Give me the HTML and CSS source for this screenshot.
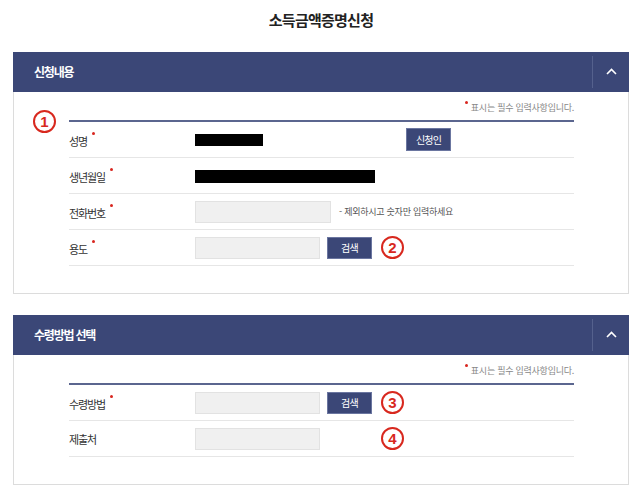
FILE: index.html
```
<!DOCTYPE html>
<html lang="ko">
<head>
<meta charset="utf-8">
<title>소득금액증명신청</title>
<link rel="stylesheet" href="styles.css">
</head>
<body>
<h1 class="page-title">소득금액증명신청</h1>

<section class="panel">
  <div class="panel-head">
    <h2 class="panel-title">신청내용</h2>
    <button class="toggle" type="button" aria-label="접기">
      <svg width="11" height="7" viewBox="0 0 11 7"><polyline points="1,6 5.5,1.5 10,6" fill="none" stroke="#fff" stroke-width="1.6"/></svg>
    </button>
  </div>
  <div class="panel-body">
    <span class="mark mark-overlay">1</span>
    <p class="req-note"><span class="dot"></span>표시는 필수 입력사항입니다.</p>
    <div class="form">
      <div class="row">
        <div class="label">성명<span class="dot"></span></div>
        <div class="value">
          <span class="slot"><span class="masked masked-name"></span></span>
          <button class="btn btn-tall" type="button">신청인</button>
        </div>
      </div>
      <div class="row">
        <div class="label">생년월일<span class="dot"></span></div>
        <div class="value"><span class="masked masked-birth"></span></div>
      </div>
      <div class="row">
        <div class="label">전화번호<span class="dot"></span></div>
        <div class="value">
          <span class="input input-wide"></span>
          <span class="hint">- 제외하시고 숫자만 입력하세요</span>
        </div>
      </div>
      <div class="row">
        <div class="label">용도<span class="dot"></span></div>
        <div class="value ctrl-grid">
          <span class="input"></span>
          <button class="btn" type="button">검색</button>
          <span class="mark">2</span>
        </div>
      </div>
    </div>
  </div>
</section>

<section class="panel">
  <div class="panel-head">
    <h2 class="panel-title">수령방법 선택</h2>
    <button class="toggle" type="button" aria-label="접기">
      <svg width="11" height="7" viewBox="0 0 11 7"><polyline points="1,6 5.5,1.5 10,6" fill="none" stroke="#fff" stroke-width="1.6"/></svg>
    </button>
  </div>
  <div class="panel-body">
    <p class="req-note"><span class="dot"></span>표시는 필수 입력사항입니다.</p>
    <div class="form">
      <div class="row">
        <div class="label">수령방법<span class="dot"></span></div>
        <div class="value ctrl-grid">
          <span class="input"></span>
          <button class="btn" type="button">검색</button>
          <span class="mark">3</span>
        </div>
      </div>
      <div class="row">
        <div class="label">제출처</div>
        <div class="value ctrl-grid">
          <span class="input"></span>
          <span class="mark mark-col3">4</span>
        </div>
      </div>
    </div>
  </div>
</section>
</body>
</html>
```

FILE: styles.css
```
* { box-sizing: border-box; }

body {
  margin: 0;
  padding: 0 13px;
  background: #fff;
  font-family: "Noto Sans CJK KR", "Noto Sans", sans-serif;
  color: #333;
}

.page-title {
  margin: 0 0 22px;
  padding-top: 10px;
  height: 30px;
  line-height: 20px;
  font-size: 15px;
  font-weight: 700;
  letter-spacing: -0.75px;
  text-align: center;
  color: #222;
}

.panel { margin-bottom: 21px; }

.panel-head {
  display: flex;
  align-items: center;
  justify-content: space-between;
  height: 40px;
  background: #3b4777;
}

.panel-title {
  margin: 0;
  padding-left: 21px;
  font-size: 12px;
  font-weight: 700;
  letter-spacing: -1.2px;
  color: #fff;
  line-height: 16px;
}

.toggle {
  display: flex;
  align-items: center;
  justify-content: center;
  width: 37px;
  height: 32px;
  margin: 0;
  padding: 0 0 2px;
  border: 0;
  border-left: 1px solid #55618d;
  background: transparent;
}

.panel-body {
  position: relative;
  border: 1px solid #dcdcdc;
  border-top: 0;
  padding: 9px 54px 27px 55px;
}

.req-note {
  margin: 0 0 7px;
  height: 12px;
  line-height: 12px;
  font-size: 9px;
  letter-spacing: -0.25px;
  color: #888;
  text-align: right;
}

.req-note .dot { margin-right: 3px; vertical-align: 7px; }

.dot {
  display: inline-block;
  width: 3px;
  height: 3px;
  border-radius: 50%;
  background: #d8261f;
}

.form { border-top: 2px solid #5b668f; }

.row {
  display: grid;
  grid-template-columns: 126px 1fr;
  align-items: center;
  height: 36px;
  border-bottom: 1px solid #e6e6e6;
}

.label {
  font-size: 11px;
  letter-spacing: -1.1px;
  color: #333;
  line-height: 14px;
}

.label .dot { margin-left: 5px; vertical-align: 11px; }

.value {
  display: flex;
  align-items: center;
}

.slot { width: 211px; display: flex; }

.masked { display: block; background: #000; }
.masked-name { width: 68px; height: 12px; }
.masked-birth { width: 180px; height: 13px; margin-top: 1px; }

.input {
  display: block;
  width: 125px;
  height: 22px;
  background: #f0f0f0;
  border: 1px solid #e2e2e2;
}

.input-wide { width: 136px; }

.hint {
  margin-left: 8px;
  font-size: 9px;
  letter-spacing: -0.25px;
  color: #555;
}

.btn {
  display: flex;
  align-items: center;
  justify-content: center;
  width: 45px;
  height: 22px;
  margin: 0;
  padding: 0;
  border: 1px solid #6b76a0;
  background: #3b4777;
  color: #fff;
  font-family: inherit;
  font-size: 10px;
  letter-spacing: -0.8px;
}

.btn-tall { height: 23px; }

.ctrl-grid {
  display: grid;
  grid-template-columns: 125px 45px 23px;
  column-gap: 7px;
  align-items: center;
}

.mark {
  display: flex;
  align-items: center;
  justify-content: center;
  width: 23px;
  height: 23px;
  margin-left: 2px;
  border: 2.5px solid #d8281e;
  border-radius: 50%;
  color: #d8281e;
  font-family: "Liberation Sans", Arial, sans-serif;
  font-size: 15px;
  font-weight: 700;
  line-height: 1;
}

.mark-col3 { grid-column: 3; }

.mark-overlay {
  position: absolute;
  left: 19px;
  top: 18px;
  margin: 0;
}
```
